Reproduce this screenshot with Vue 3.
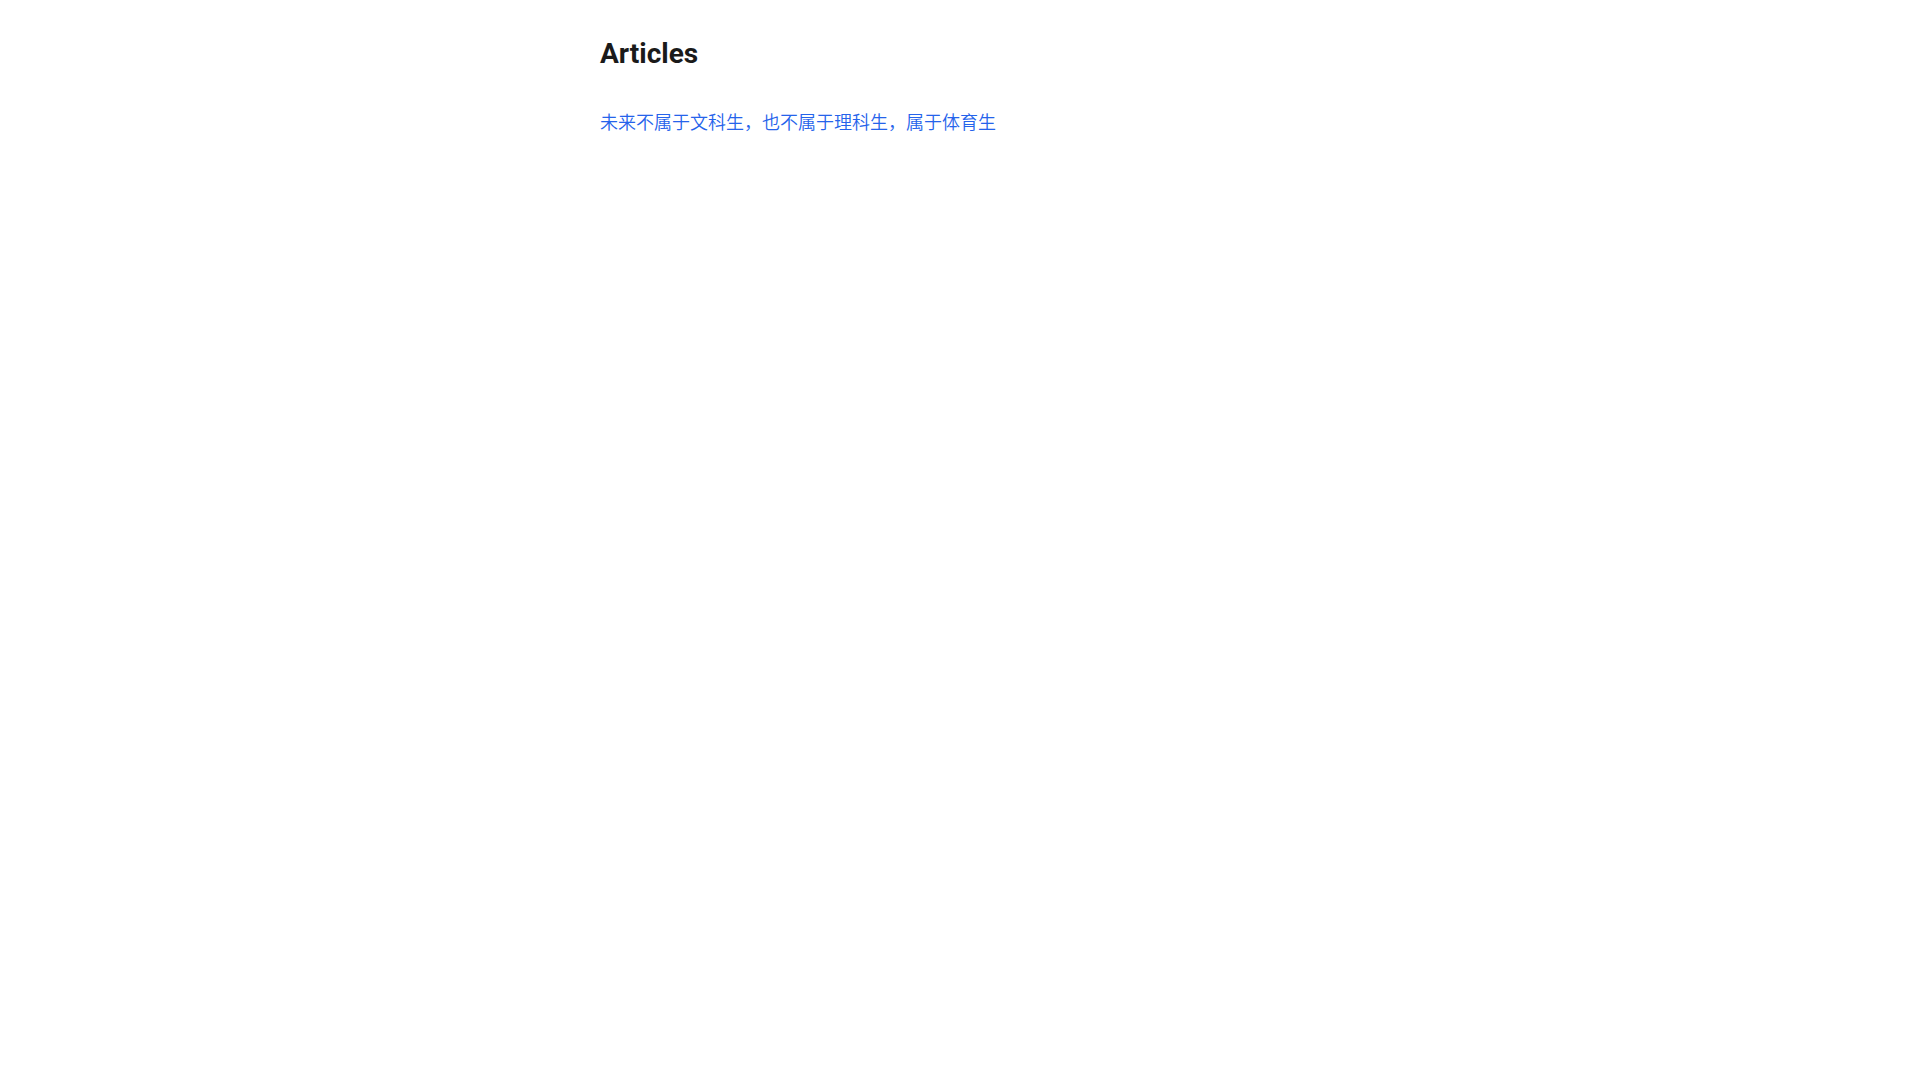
<template>
  <main class="articles-page">
    <h1 class="page-title">Articles</h1>
    <ul class="article-list">
      <li v-for="article in articles" :key="article.id">
        <a :href="article.url" class="article-link">{{ article.title }}</a>
      </li>
    </ul>
  </main>
</template>

<script setup>
import { ref } from 'vue'

const articles = ref([
  { id: 1, title: '未来不属于文科生，也不属于理科生，属于体育生', url: '#article-1' }
])
</script>

<style>
body {
  margin: 0;
  background-color: #fff;
}
</style>

<style scoped>
.articles-page {
  box-sizing: border-box;
  max-width: 720px;
  margin: 0 auto;
  padding: 32px 0;
  font-family: Roboto, 'Noto Sans CJK SC', sans-serif;
  font-size: 18px;
  font-weight: 350;
  line-height: 30px;
  color: #1a1a1a;
}

.page-title {
  margin: 0 0 32px;
  font-size: 28px;
  font-weight: 700;
  line-height: 44px;
}

.article-list {
  margin: 0;
  padding: 0;
  list-style: none;
}

.article-link {
  color: #2563eb;
  text-decoration: none;
}

.article-link:hover {
  text-decoration: underline;
}
</style>
